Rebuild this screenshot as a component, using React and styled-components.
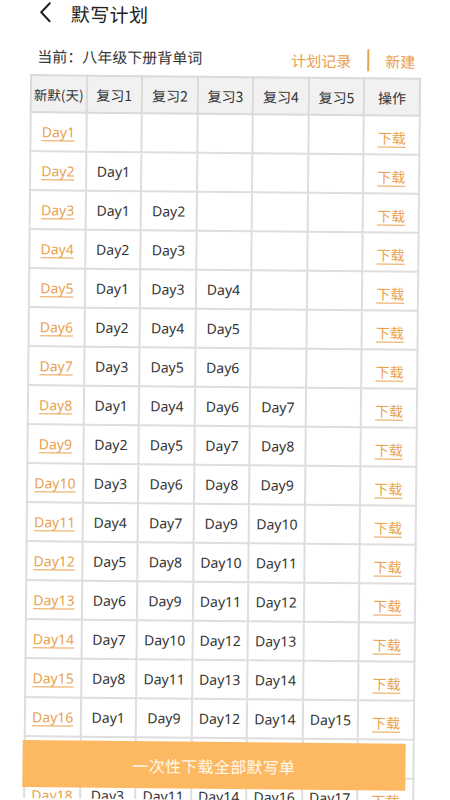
import React from "react";
import styled, { createGlobalStyle } from "styled-components";

const orange = "#e9a24e";

const GlobalStyle = createGlobalStyle`
  html, body {
    margin: 0;
    padding: 0;
    background: #fff;
    overflow: hidden;
  }
  body {
    font-family: "Noto Sans", "Noto Sans CJK SC", sans-serif;
    color: #333;
  }
`;

const Screen = styled.div`
  position: relative;
  width: 450px;
  height: 800px;
  overflow: hidden;
  background: #fff;
  transform: rotate(0.55deg);
  transform-origin: 225px 400px;
`;

const Header = styled.div`
  display: flex;
  align-items: center;
  gap: 17px;
  height: 28px;
  padding-left: 34px;
`;

const Title = styled.span`
  font-family: "Noto Sans CJK SC", sans-serif;
  font-size: 19px;
  color: #222;
  letter-spacing: 0.5px;
`;

const InfoBar = styled.div`
  display: flex;
  align-items: center;
  justify-content: space-between;
  margin-top: 17px;
  height: 24px;
  padding: 0 38px 0 34px;
`;

const Current = styled.span`
  font-family: "Noto Sans CJK SC", sans-serif;
  font-size: 15px;
  color: #333;
`;

const Actions = styled.div`
  display: flex;
  align-items: center;
  gap: 16px;
`;

const ActionLink = styled.span`
  font-family: "Noto Sans CJK SC", sans-serif;
  font-size: 15px;
  color: ${orange};
  padding-top: 4px;
`;

const Divider = styled.span`
  width: 2px;
  height: 22px;
  background: ${orange};
  margin-top: 3px;
`;

const TableWrap = styled.div`
  margin: 7px 0 0 27px;
  width: 391px;
`;

const Table = styled.table`
  width: 391px;
  border-collapse: collapse;
  table-layout: fixed;
  border: 2px solid #d9d9d9;
`;

const Th = styled.th`
  height: 35px;
  padding: 0;
  background: #f1f1f1;
  border: 2px solid #dadada;
  font-family: "Noto Sans CJK SC", sans-serif;
  font-weight: 400;
  font-size: ${props => (props.small ? "13.5px" : "14px")};
  color: #333;
  text-align: center;
  white-space: nowrap;
`;

const Td = styled.td`
  height: 37px;
  padding: 0;
  border: 2px solid #dedede;
  text-align: center;
  font-size: 14px;
  color: #333;
  white-space: nowrap;
`;

const DayLink = styled.span`
  color: ${orange};
  text-decoration: underline;
  text-underline-offset: 3px;
  text-decoration-thickness: 1px;
  font-size: 14px;
`;

const Download = styled(DayLink)`
  font-family: "Noto Sans CJK SC", sans-serif;
  font-size: 14px;
  position: relative;
  top: 2px;
`;

const BigButton = styled.button`
  position: absolute;
  left: 26px;
  bottom: 11px;
  width: 383px;
  height: 47px;
  border: none;
  border-radius: 0;
  background: #fdb962;
  color: #fff8ee;
  font-family: "Noto Sans CJK SC", sans-serif;
  font-size: 16px;
  letter-spacing: 0.3px;
`;

const BackIcon = () => (
  <svg width="16" height="22" viewBox="0 0 16 22">
    <path
      d="M12 2 L3.5 11 L12 20"
      fill="none"
      stroke="#222"
      strokeWidth="2"
      strokeLinecap="round"
      strokeLinejoin="round"
    />
  </svg>
);

const offsets = [1, 2, 4, 7, 15];

const rows = Array.from({ length: 18 }, (_, i) => {
  const day = i + 1;
  const reviews = offsets
    .map(o => day - o)
    .filter(d => d >= 1)
    .sort((a, b) => a - b)
    .map(d => `Day${d}`);
  return { day, reviews };
});

const headers = ["新默(天)", "复习1", "复习2", "复习3", "复习4", "复习5", "操作"];

const App = () => (
  <>
    <GlobalStyle />
    <Screen>
      <Header>
        <BackIcon />
        <Title>默写计划</Title>
      </Header>
      <InfoBar>
        <Current>当前：八年级下册背单词</Current>
        <Actions>
          <ActionLink>计划记录</ActionLink>
          <Divider />
          <ActionLink>新建</ActionLink>
        </Actions>
      </InfoBar>
      <TableWrap>
        <Table>
          <thead>
            <tr>
              {headers.map((h, i) => (
                <Th key={h} small={i === 0}>
                  {h}
                </Th>
              ))}
            </tr>
          </thead>
          <tbody>
            {rows.map(({ day, reviews }) => (
              <tr key={day}>
                <Td>
                  <DayLink>Day{day}</DayLink>
                </Td>
                {[0, 1, 2, 3, 4].map(k => (
                  <Td key={k}>{reviews[k] || ""}</Td>
                ))}
                <Td>
                  <Download>下载</Download>
                </Td>
              </tr>
            ))}
          </tbody>
        </Table>
      </TableWrap>
      <BigButton>一次性下载全部默写单</BigButton>
    </Screen>
  </>
);

export default App;
